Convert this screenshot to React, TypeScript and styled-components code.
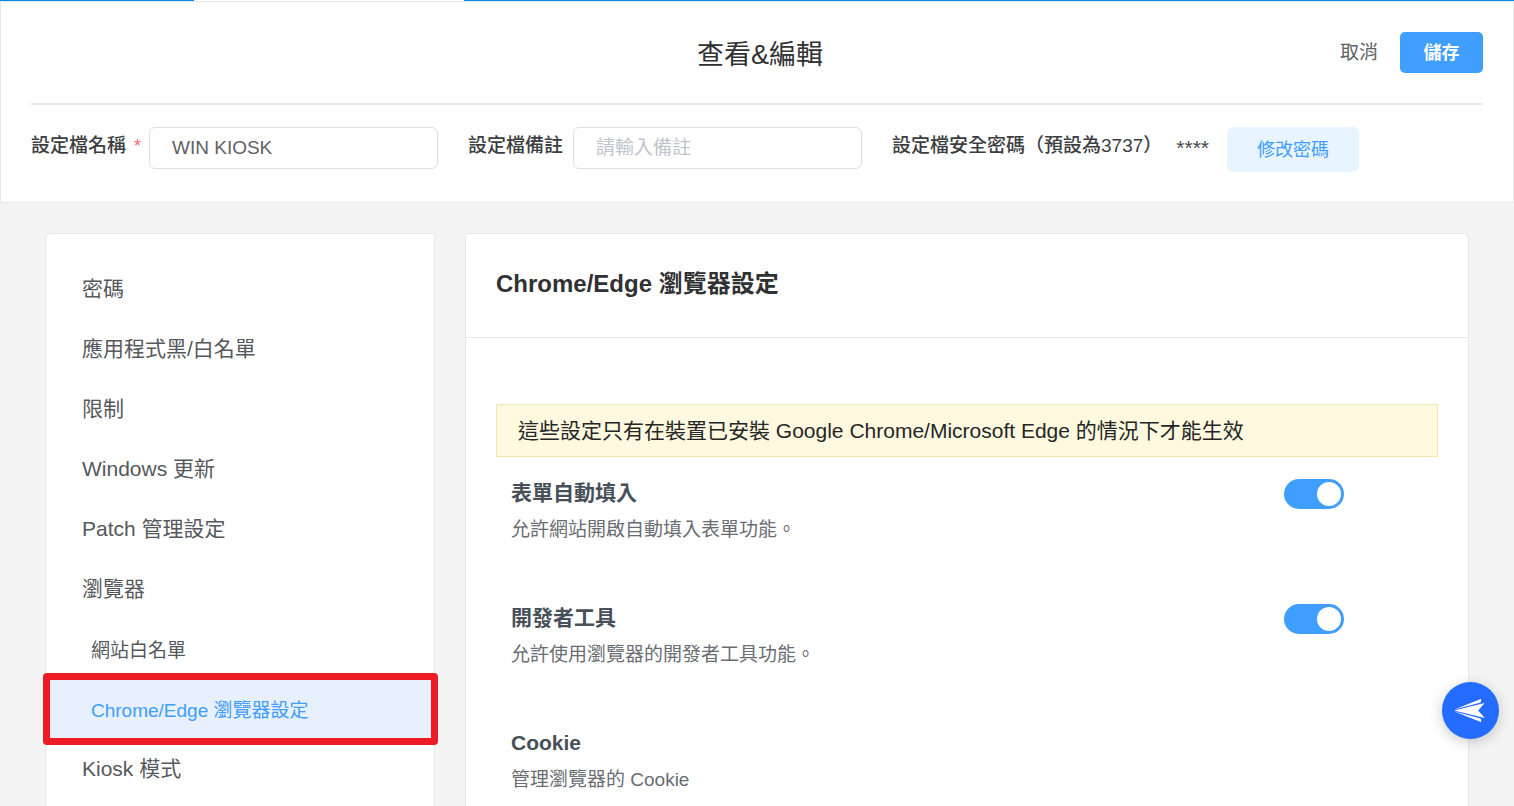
import React, { useState } from 'react';
import styled, { createGlobalStyle } from 'styled-components';

const GlobalStyle = createGlobalStyle`
  *, *::before, *::after { box-sizing: border-box; }
  body {
    margin: 0;
    background: #f4f4f4;
    color: #303133;
    font-family: "Liberation Sans", "Noto Sans CJK TC", sans-serif;
  }
  button, input { font-family: inherit; }
  h1, h2, h3, p, ul { margin: 0; padding: 0; }
`;

const Page = styled.div`
  display: flex;
  flex-direction: column;
  height: 100vh;
  overflow: hidden;
`;

const TabStrip = styled.div`
  display: flex;
  flex: none;
  height: 1px;
  background: #0089ee;
`;

const ActiveTab = styled.div`
  width: 270px;
  margin-left: 194px;
  background: #fff;
`;

const Header = styled.header`
  flex: none;
  padding: 0 30px 30px;
  background: #fff;
  border: 1px solid #e8e8e8;
`;

const Toolbar = styled.div`
  display: grid;
  grid-template-columns: 1fr auto 1fr;
  align-items: center;
  height: 103px;
  border-bottom: 2px solid #e8e8e8;
`;

const PageTitle = styled.h1`
  grid-column: 2;
  padding: 4px 0 0 6px;
  font-size: 27px;
  line-height: 40px;
  font-weight: 400;
`;

const Actions = styled.div`
  display: flex;
  justify-content: flex-end;
  align-items: center;
  gap: 22px;
`;

const TextButton = styled.button`
  padding: 0;
  border: 0;
  background: none;
  color: #606266;
  font-size: 19px;
  line-height: 30px;
  cursor: pointer;
`;

const SaveButton = styled.button`
  width: 83px;
  height: 41px;
  padding: 0 0 4px;
  border: 0;
  border-radius: 5px;
  background: #409eff;
  color: #fff;
  font-size: 18px;
  font-weight: 700;
  cursor: pointer;
`;

const Fields = styled.div`
  display: flex;
  align-items: flex-start;
  gap: 30px;
  padding-top: 22px;
`;

const Field = styled.div`
  display: flex;
  align-items: flex-start;
`;

const FieldLabel = styled.label`
  min-width: 105px;
  color: #3c3e42;
  font-size: 19px;
  font-weight: 500;
  line-height: 38px;
  white-space: nowrap;
`;

const NameLabel = styled(FieldLabel)`
  min-width: 118px;
`;

const SecurityLabel = styled(FieldLabel)`
  min-width: 270px;
`;

const Required = styled.span`
  margin-left: 8px;
  color: #f56c6c;
  font-size: 18px;
  font-weight: 400;
`;

const TextInput = styled.input`
  width: 289px;
  height: 42px;
  padding: 0 22px;
  border: 1px solid #dcdfe6;
  border-radius: 6px;
  background: #fff;
  color: #606266;
  font-size: 19px;
  outline: none;
  &::placeholder { color: #c0c4cc; opacity: 1; }
`;

const Stars = styled.span`
  margin: 0 18px 0 14px;
  color: #4a4c50;
  font-size: 21px;
  line-height: 42px;
`;

const SoftButton = styled.button`
  width: 132px;
  height: 45px;
  padding: 0 0 4px;
  border: 0;
  border-radius: 6px;
  background: #e8f4ff;
  color: #409eff;
  font-size: 18px;
  cursor: pointer;
`;

const Content = styled.div`
  display: flex;
  flex: 1;
  gap: 30px;
  min-height: 0;
  padding: 30px 45px 0;
`;

const Panel = styled.div`
  background: #fff;
  border: 1px solid #e8e8e8;
  border-bottom: 0;
`;

const Sidebar = styled(Panel).attrs({ as: 'nav' })`
  flex: none;
  width: 390px;
  padding-top: 24px;
  border-radius: 6px 0 0 0;
`;

const MenuList = styled.ul`
  list-style: none;
`;

const MenuItem = styled.li`
  position: relative;
`;

const MenuLink = styled.a<{ $sub?: boolean; $active?: boolean }>`
  display: block;
  height: 60px;
  padding: ${p => (p.$sub ? '2px 45px 0' : '0 36px')};
  background: ${p => (p.$active ? '#e8effd' : 'transparent')};
  color: ${p => (p.$active ? '#409eff' : '#55585d')};
  font-size: ${p => (p.$sub ? '19px' : '21px')};
  line-height: 61px;
  text-decoration: none;
`;

const Highlight = styled.span`
  position: absolute;
  inset: -5px -4px -7px -3px;
  border: 7px solid #ed1c24;
  border-radius: 4px;
  pointer-events: none;
`;

const Main = styled(Panel).attrs({ as: 'main' })`
  flex: 1;
  min-width: 0;
  border-radius: 0 6px 0 0;
`;

const MainHeader = styled.div`
  padding: 30px 30px 34px;
  border-bottom: 1px solid #e8e8e8;
`;

const SectionTitle = styled.h2`
  font-size: 24px;
  line-height: 39px;
  font-weight: 700;
`;

const MainBody = styled.div`
  padding: 66px 30px 0;
`;

const Notice = styled.p`
  padding: 0 21px;
  background: #fff9e0;
  border: 1px solid #f3e6ae;
  color: #262626;
  font-size: 21px;
  line-height: 51px;
`;

const Setting = styled.div`
  display: grid;
  grid-template-columns: 1fr 139px;
  padding: 21px 15px 37px;
`;

const SettingTitle = styled.h3`
  color: #475059;
  font-size: 21px;
  line-height: 30px;
  font-weight: 700;
`;

const SettingText = styled.p`
  margin-top: 7px;
  color: #6a6d73;
  font-size: 19px;
  line-height: 30px;
`;

const Switch = styled.input`
  appearance: none;
  width: 60px;
  height: 30px;
  margin: 1px 0 0;
  padding: 3px;
  border-radius: 15px;
  background: #dcdfe6;
  cursor: pointer;
  &::before {
    content: "";
    display: block;
    width: 24px;
    height: 24px;
    border-radius: 50%;
    background: #fff;
  }
  &:checked { background: #409eff; }
  &:checked::before { margin-left: 30px; }
`;

const FloatButton = styled.button`
  position: fixed;
  right: 15px;
  bottom: 67px;
  width: 57px;
  height: 57px;
  padding: 0;
  border: 0;
  border-radius: 50%;
  background: #246bff;
  box-shadow: 0 3px 14px rgba(0, 0, 0, 0.2);
  cursor: pointer;
  svg { display: block; }
`;

const menu: { text: string; sub?: boolean; active?: boolean }[] = [
  { text: '密碼' },
  { text: '應用程式黑/白名單' },
  { text: '限制' },
  { text: 'Windows 更新' },
  { text: 'Patch 管理設定' },
  { text: '瀏覽器' },
  { text: '網站白名單', sub: true },
  { text: 'Chrome/Edge 瀏覽器設定', sub: true, active: true },
  { text: 'Kiosk 模式' },
];

const settings = [
  { id: 'autofill', title: '表單自動填入', text: '允許網站開啟自動填入表單功能。', toggle: true },
  { id: 'devtools', title: '開發者工具', text: '允許使用瀏覽器的開發者工具功能。', toggle: true },
  { id: 'cookie', title: 'Cookie', text: '管理瀏覽器的 Cookie', toggle: false },
];

export default function App() {
  const [name, setName] = useState('WIN KIOSK');
  const [note, setNote] = useState('');
  return (
    <Page>
      <GlobalStyle />
      <TabStrip><ActiveTab /></TabStrip>
      <Header>
        <Toolbar>
          <PageTitle>查看&amp;編輯</PageTitle>
          <Actions>
            <TextButton type="button">取消</TextButton>
            <SaveButton type="button">儲存</SaveButton>
          </Actions>
        </Toolbar>
        <Fields>
          <Field>
            <NameLabel htmlFor="name">設定檔名稱<Required>*</Required></NameLabel>
            <TextInput id="name" value={name} onChange={e => setName(e.target.value)} />
          </Field>
          <Field>
            <FieldLabel htmlFor="note">設定檔備註</FieldLabel>
            <TextInput id="note" placeholder="請輸入備註" value={note} onChange={e => setNote(e.target.value)} />
          </Field>
          <Field>
            <SecurityLabel as="span">設定檔安全密碼（預設為3737）</SecurityLabel>
            <Stars>****</Stars>
            <SoftButton type="button">修改密碼</SoftButton>
          </Field>
        </Fields>
      </Header>
      <Content>
        <Sidebar>
          <MenuList>
            {menu.map(m => (
              <MenuItem key={m.text}>
                <MenuLink href="#" $sub={m.sub} $active={m.active}>{m.text}</MenuLink>
                {m.active && <Highlight />}
              </MenuItem>
            ))}
          </MenuList>
        </Sidebar>
        <Main>
          <MainHeader>
            <SectionTitle>Chrome/Edge 瀏覽器設定</SectionTitle>
          </MainHeader>
          <MainBody>
            <Notice>這些設定只有在裝置已安裝 Google Chrome/Microsoft Edge 的情況下才能生效</Notice>
            {settings.map(s => (
              <Setting key={s.id}>
                <div>
                  <SettingTitle id={s.id}>{s.title}</SettingTitle>
                  <SettingText>{s.text}</SettingText>
                </div>
                {s.toggle && <Switch type="checkbox" role="switch" aria-labelledby={s.id} defaultChecked />}
              </Setting>
            ))}
          </MainBody>
        </Main>
      </Content>
      <FloatButton type="button" aria-label="助理">
        <svg width="57" height="57" viewBox="0 0 57 57" fill="#fff">
          <path d="M12 28.5 42.7 21 36.2 28.5 42.7 36Z" />
          <path d="M12.5 27.6 39.3 16.8 38.7 20.6Z" />
          <path d="M12.5 29.4 39.3 40.2 38.7 36.4Z" />
        </svg>
      </FloatButton>
    </Page>
  );
}
